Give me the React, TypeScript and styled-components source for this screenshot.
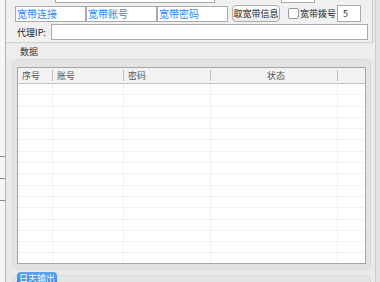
import React from "react";
import styled, { createGlobalStyle } from "styled-components";

const Global = createGlobalStyle`
  html, body { margin: 0; padding: 0; background: #f0f0f0; overflow: hidden; }
  body { font-family: "Noto Sans CJK SC", "Noto Sans", sans-serif; color: #222; }
  * { box-sizing: border-box; }
`;

const Page = styled.div`
  width: 380px;
  height: 282px;
  display: flex;
  overflow: hidden;
  background: #f0f0f0;
`;

const LeftStrip = styled.div`
  width: 6px;
  flex: none;
  display: flex;
  flex-direction: column;
  padding-top: 156px;
  gap: 21px;
  background: #f6f6f6;
  border-right: 1px solid #b4b4b4;
`;

const StripLine = styled.div`
  height: 1px;
  background: #8a8a8a;
`;

const Main = styled.div`
  flex: 1;
  display: flex;
  flex-direction: column;
  background: #e9e9e9;
  min-width: 0;
`;

const RightStrip = styled.div`
  width: 5px;
  flex: none;
  background: #e2e2e2;
  border-left: 1px solid #cdcdcd;
`;

const TopPanel = styled.div`
  margin-top: -14px;
  margin-right: 2px;
  padding: 0 0 2px 8px;
  display: flex;
  flex-direction: column;
  gap: 2px;
  background: #f0f0f0;
  border-bottom: 1px solid #d4d4d4;
  border-right: 1px solid #c8c8c8;
`;

const Row = styled.div<{ $h: number }>`
  display: flex;
  align-items: center;
  height: ${(p) => p.$h}px;
`;

const Label = styled.span<{ $ml?: number; $w?: number }>`
  font-size: 9px;
  color: #222;
  white-space: nowrap;
  margin-left: ${(p) => p.$ml ?? 0}px;
  width: ${(p) => (p.$w ? `${p.$w}px` : "auto")};
`;

const TextBox = styled.div<{ $w: number; $ml?: number; $h?: number }>`
  width: ${(p) => p.$w}px;
  height: ${(p) => p.$h ?? 16}px;
  margin-left: ${(p) => p.$ml ?? 0}px;
  background: #fff;
  border: 1px solid #a9a9a9;
  font-size: 9px;
  line-height: ${(p) => (p.$h ?? 16) - 2}px;
  padding-left: 5px;
  color: #222;
  flex: none;
`;

const BlueBox = styled.div<{ $ml?: number }>`
  width: 71px;
  height: 16px;
  margin-left: ${(p) => p.$ml ?? 0}px;
  background: #fff;
  border: 1px solid #a9a9a9;
  color: #2b8cf2;
  font-size: 10px;
  line-height: 14px;
  padding-left: 1px;
  flex: none;
  white-space: nowrap;
`;

const Button = styled.div`
  margin-left: 4px;
  width: 48px;
  height: 17px;
  border: 1px solid #adadad;
  border-radius: 4px;
  background: linear-gradient(#fbfbfb, #ececec);
  font-size: 9px;
  line-height: 15px;
  text-align: center;
  color: #222;
  flex: none;
`;

const Check = styled.div`
  margin-left: 8px;
  width: 11px;
  height: 11px;
  border: 1px solid #999;
  border-radius: 2px;
  background: #fff;
  flex: none;
`;

const SectionLabel = styled.div`
  height: 15px;
  margin-top: 1px;
  padding-left: 14px;
  font-size: 9px;
  line-height: 15px;
  color: #333;
  background: #ededed;
`;

const GroupBox = styled.div<{ $h: number }>`
  height: ${(p) => p.$h}px;
  margin: 0 4px 0 6px;
  padding: 7px 4px 5px 4px;
  background: #e3e3e3;
  border: 1px solid #dadada;
  border-radius: 6px;
  display: flex;
  flex: none;
`;

const Table = styled.div`
  flex: 1;
  display: flex;
  flex-direction: column;
  background: #fff;
  border: 1px solid #a6a6a6;
  overflow: hidden;
`;

const COLS = "35px 71px 87px 127px 1fr";

const Header = styled.div`
  display: grid;
  grid-template-columns: ${COLS};
  height: 16px;
  flex: none;
  background: #f2f2f2;
  border-bottom: 1px solid #c4c4c4;
`;

const HeadCell = styled.div<{ $center?: boolean; $last?: boolean }>`
  font-size: 9px;
  color: #555;
  padding-left: 4px;
  text-align: ${(p) => (p.$center ? "center" : "left")};
  border-right: ${(p) => (p.$last ? "none" : "1px solid #bdbdbd")};
  margin: 2px 0;
  line-height: 11px;
`;

const BodyRow = styled.div`
  display: grid;
  grid-template-columns: ${COLS};
  height: 11.3px;
  flex: none;
  border-bottom: 1px solid #f1f1f1;
`;

const BodyCell = styled.div<{ $last?: boolean }>`
  border-right: ${(p) => (p.$last ? "none" : "1px solid #f1f1f1")};
`;

const LogArea = styled.div`
  position: relative;
  margin-top: 2px;
  height: 20px;
`;

const LogGroup = styled.div`
  margin: 3px 4px 0 6px;
  height: 20px;
  padding: 6px 4px 0 5px;
  background: #e3e3e3;
  border: 1px solid #dadada;
  border-radius: 6px 6px 0 0;
`;

const LogBox = styled.div`
  height: 14px;
  background: #f7f7f7;
  border: 1px solid #a6a6a6;
  border-bottom: none;
`;

const LogTab = styled.div`
  position: absolute;
  left: 11px;
  top: 0;
  width: 40px;
  height: 13px;
  border-radius: 4px 4px 0 0;
  background: linear-gradient(#5aa3f0, #3385e0);
  color: #fff;
  font-size: 9px;
  line-height: 13px;
  text-align: center;
`;

const columns = ["序号", "账号", "密码", "状态", ""];

export default function App() {
  return (
    <>
      <Global />
      <Page>
        <LeftStrip>
          <StripLine />
          <StripLine />
          <StripLine />
        </LeftStrip>
        <Main>
          <TopPanel>
            <Row $h={17}>
              <Label $w={40} $ml={1}>账号:</Label>
              <TextBox $w={160} $h={17} />
              <Label $w={60} $ml={6}>密码:</Label>
              <TextBox $w={34} $h={17} />
            </Row>
            <Row $h={17}>
              <BlueBox $ml={1}>宽带连接</BlueBox>
              <BlueBox>宽带账号</BlueBox>
              <BlueBox>宽带密码</BlueBox>
              <Button>取宽带信息</Button>
              <Check />
              <Label $ml={1}>宽带拨号</Label>
              <TextBox $w={24} $h={17} $ml={1}>5</TextBox>
            </Row>
            <Row $h={16}>
              <Label $w={34} $ml={3}>代理IP:</Label>
              <TextBox $w={317} $h={16} />
            </Row>
          </TopPanel>
          <SectionLabel>数据</SectionLabel>
          <GroupBox $h={211}>
            <Table>
              <Header>
                {columns.map((c, i) => (
                  <HeadCell key={i} $center={i === 3} $last={i === 4}>
                    {c}
                  </HeadCell>
                ))}
              </Header>
              {Array.from({ length: 16 }).map((_, r) => (
                <BodyRow key={r}>
                  {columns.map((_, i) => (
                    <BodyCell key={i} $last={i === 4} />
                  ))}
                </BodyRow>
              ))}
            </Table>
          </GroupBox>
          <LogArea>
            <LogGroup>
              <LogBox />
            </LogGroup>
            <LogTab>日志输出</LogTab>
          </LogArea>
        </Main>
        <RightStrip />
      </Page>
    </>
  );
}
